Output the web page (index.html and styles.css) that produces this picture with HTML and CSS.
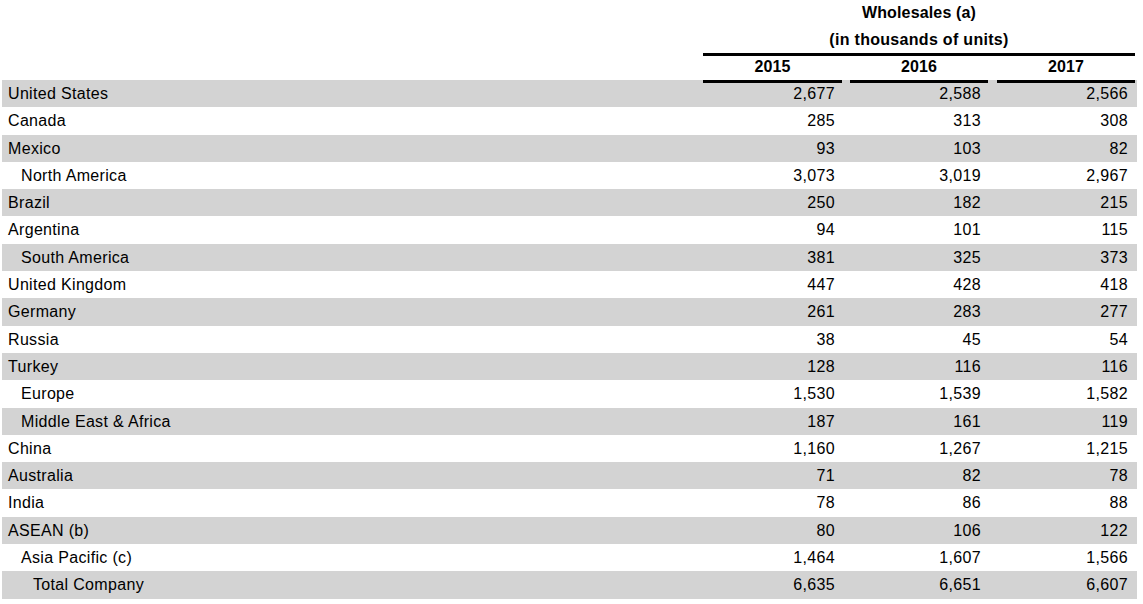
FILE: index.html
```html
<!DOCTYPE html>
<html>
<head>
<meta charset="utf-8">
<link rel="stylesheet" href="styles.css">
</head>
<body>
<div class="sheet">
  <div class="head">
    <div class="hrow"><div></div><div class="span">Wholesales (a)</div></div>
    <div class="hrow"><div></div><div class="span topline">(in thousands of units)</div></div>
    <div class="hrow years">
      <div></div>
      <div class="yc"><div class="yl">2015</div></div>
      <div class="yc g1"><div class="yl">2016</div></div>
      <div class="yc g2"><div class="yl">2017</div></div>
    </div>
  </div>
  <div class="body">
    <div class="row"><div class="lab">United States</div><div class="n">2,677</div><div class="n g1">2,588</div><div class="n g2">2,566</div></div>
    <div class="row"><div class="lab">Canada</div><div class="n">285</div><div class="n g1">313</div><div class="n g2">308</div></div>
    <div class="row"><div class="lab">Mexico</div><div class="n">93</div><div class="n g1">103</div><div class="n g2">82</div></div>
    <div class="row"><div class="lab sub">North America</div><div class="n">3,073</div><div class="n g1">3,019</div><div class="n g2">2,967</div></div>
    <div class="row"><div class="lab">Brazil</div><div class="n">250</div><div class="n g1">182</div><div class="n g2">215</div></div>
    <div class="row"><div class="lab">Argentina</div><div class="n">94</div><div class="n g1">101</div><div class="n g2">115</div></div>
    <div class="row"><div class="lab sub">South America</div><div class="n">381</div><div class="n g1">325</div><div class="n g2">373</div></div>
    <div class="row"><div class="lab">United Kingdom</div><div class="n">447</div><div class="n g1">428</div><div class="n g2">418</div></div>
    <div class="row"><div class="lab">Germany</div><div class="n">261</div><div class="n g1">283</div><div class="n g2">277</div></div>
    <div class="row"><div class="lab">Russia</div><div class="n">38</div><div class="n g1">45</div><div class="n g2">54</div></div>
    <div class="row"><div class="lab">Turkey</div><div class="n">128</div><div class="n g1">116</div><div class="n g2">116</div></div>
    <div class="row"><div class="lab sub">Europe</div><div class="n">1,530</div><div class="n g1">1,539</div><div class="n g2">1,582</div></div>
    <div class="row"><div class="lab sub">Middle East &amp; Africa</div><div class="n">187</div><div class="n g1">161</div><div class="n g2">119</div></div>
    <div class="row"><div class="lab">China</div><div class="n">1,160</div><div class="n g1">1,267</div><div class="n g2">1,215</div></div>
    <div class="row"><div class="lab">Australia</div><div class="n">71</div><div class="n g1">82</div><div class="n g2">78</div></div>
    <div class="row"><div class="lab">India</div><div class="n">78</div><div class="n g1">86</div><div class="n g2">88</div></div>
    <div class="row"><div class="lab">ASEAN (b)</div><div class="n">80</div><div class="n g1">106</div><div class="n g2">122</div></div>
    <div class="row"><div class="lab sub">Asia Pacific (c)</div><div class="n">1,464</div><div class="n g1">1,607</div><div class="n g2">1,566</div></div>
    <div class="row"><div class="lab total">Total Company</div><div class="n">6,635</div><div class="n g1">6,651</div><div class="n g2">6,607</div></div>
  </div>
</div>
</body>
</html>
```

FILE: styles.css
```css
html, body {
  margin: 0;
  padding: 0;
  background: #fff;
}
body {
  font-family: "Liberation Sans", Arial, sans-serif;
  font-size: 16px;
  color: #000;
}
.sheet {
  width: 1135px;
  margin-left: 2px;
}
.hrow, .row {
  display: grid;
  grid-template-columns: 701px 139px 146px 149px;
}
.head {
  position: relative;
  z-index: 1;
  font-weight: bold;
  letter-spacing: 0.15px;
}
.hrow {
  height: 27px;
  line-height: 25px;
}
.span {
  grid-column: 2 / 5;
  text-align: center;
  padding-right: 2px;
}
.topline {
  line-height: 26px;
  height: 26px;
  box-sizing: border-box;
  letter-spacing: 0.3px;
}
.hrow:nth-child(2) {
  height: 26px;
}
.hrow:nth-child(2) .span {
  position: relative;
}
.hrow:nth-child(2) .span::after {
  content: "";
  position: absolute;
  left: 0;
  right: 2px;
  bottom: -3px;
  height: 3px;
  background: #000;
}
.years {
  height: 27px;
  margin-top: 3px;
  margin-bottom: -3px;
  line-height: 22px;
}
.yc.g2 {
  padding-right: 2px;
}
.yl {
  text-align: center;
  border-bottom: 3px solid #000;
  height: 24px;
}
.g1 .yl {
  margin-left: 8px;
}
.g2 .yl {
  margin-left: 9px;
}
.row {
  height: 27.3px;
  line-height: 27.3px;
  letter-spacing: 0.33px;
}
.row:nth-child(odd) {
  background: #d3d3d3;
}
.lab {
  padding-left: 6px;
  white-space: nowrap;
}
.lab.sub {
  padding-left: 19px;
}
.lab.total {
  padding-left: 31px;
}
.n {
  text-align: right;
  padding-right: 7px;
}
.n.g2 {
  padding-right: 9px;
}
```
